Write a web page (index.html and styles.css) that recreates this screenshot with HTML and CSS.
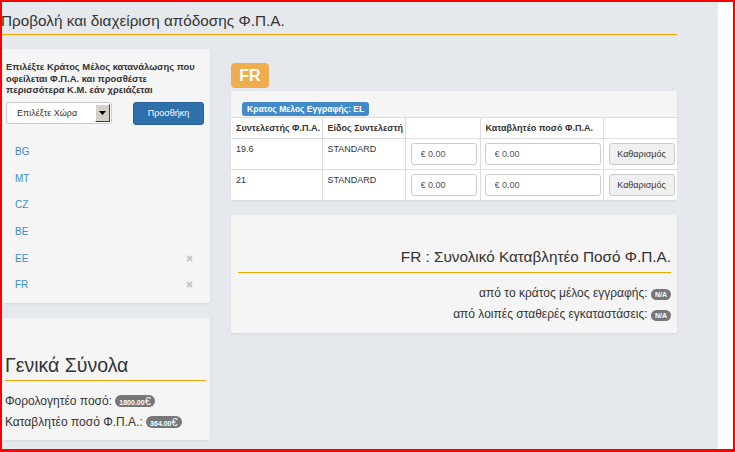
FILE: index.html
```html
<!DOCTYPE html>
<html lang="el">
<head>
<meta charset="utf-8">
<title>Φ.Π.Α.</title>
<link rel="stylesheet" href="styles.css">
</head>
<body>
<div class="frame">
  <div class="main">
    <div class="page-title">Προβολή και διαχείριση απόδοσης Φ.Π.Α.</div>
    <div class="cols">
      <div class="left-col">
        <div class="panel countries">
          <p class="intro">Επιλέξτε Κράτος Μέλος κατανάλωσης που οφείλεται Φ.Π.Α. και προσθέστε περισσότερα Κ.Μ. εάν χρειάζεται</p>
          <div class="add-row">
            <div class="select"><span class="select-text">Επιλέξτε Χώρα</span><span class="select-arrow"><svg width="7" height="4" viewBox="0 0 7 4"><path d="M0 0h7L3.5 4z" fill="#000"/></svg></span></div>
            <button class="btn-primary">Προσθήκη</button>
          </div>
          <ul class="country-list">
            <li><a>BG</a></li>
            <li><a>MT</a></li>
            <li><a>CZ</a></li>
            <li><a>BE</a></li>
            <li><a>EE</a><svg class="remove" width="7" height="7" viewBox="0 0 7 7"><path d="M1 1l5 5M6 1L1 6" stroke="#c4c4c4" stroke-width="1.8"/></svg></li>
            <li><a>FR</a><svg class="remove" width="7" height="7" viewBox="0 0 7 7"><path d="M1 1l5 5M6 1L1 6" stroke="#c4c4c4" stroke-width="1.8"/></svg></li>
          </ul>
        </div>
        <div class="panel totals">
          <h2 class="totals-title">Γενικά Σύνολα</h2>
          <div class="total-line">Φορολογητέο ποσό: <span class="badge">1800.00<span class="eur">€</span></span></div>
          <div class="total-line">Καταβλητέο ποσό Φ.Π.Α.: <span class="badge">364.00<span class="eur">€</span></span></div>
        </div>
      </div>
      <div class="right-col">
        <div class="country-tag">FR</div>
        <div class="panel rates">
          <div class="rates-top"><span class="label-blue">Κρατος Μελος Εγγραφής: EL</span></div>
          <table class="rates-table">
            <colgroup><col class="c1"><col class="c2"><col class="c3"><col class="c4"><col class="c5"></colgroup>
            <thead>
              <tr><th>Συντελεστής Φ.Π.Α.</th><th>Είδος Συντελεστή</th><th></th><th>Καταβλητέο ποσό Φ.Π.Α.</th><th></th></tr>
            </thead>
            <tbody>
              <tr><td>19.6</td><td>STANDARD</td><td><input class="inp inp-s" placeholder="€ 0.00"></td><td><input class="inp inp-l" placeholder="€ 0.00"></td><td><button class="btn-default">Καθαρισμός</button></td></tr>
              <tr><td>21</td><td>STANDARD</td><td><input class="inp inp-s" placeholder="€ 0.00"></td><td><input class="inp inp-l" placeholder="€ 0.00"></td><td><button class="btn-default">Καθαρισμός</button></td></tr>
            </tbody>
          </table>
        </div>
        <div class="panel summary">
          <h3 class="summary-title">FR : Συνολικό Καταβλητέο Ποσό Φ.Π.Α.</h3>
          <div class="summary-line">από το κράτος μέλος εγγραφής: <span class="badge badge-na">N/A</span></div>
          <div class="summary-line">από λοιπές σταθερές εγκαταστάσεις: <span class="badge badge-na">N/A</span></div>
        </div>
      </div>
    </div>
  </div>
  <div class="gutter"></div>
</div>
</body>
</html>
```
FILE: styles.css
```css
* { box-sizing: border-box; }
html, body { margin: 0; padding: 0; }
body {
  font-family: "Liberation Sans", Arial, sans-serif;
  color: #333;
  background: #fff;
}
.frame {
  width: 735px;
  height: 452px;
  border: 2px solid #ff0000;
  border-bottom-width: 3px;
  display: flex;
  overflow: hidden;
}
.main {
  width: 716px;
  background: #e5e9ee;
}
.gutter { flex: 1; background: #fff; }

.page-title {
  width: 676px;
  font-size: 15.3px;
  line-height: 20px;
  padding: 9px 0 3px 0;
  border-bottom: 1px solid #f0a500;
  color: #333;
  white-space: nowrap;
  margin-left: -1px;
}
.cols {
  display: flex;
  gap: 21px;
  margin-top: 14px;
}
.left-col { width: 208px; display: flex; flex-direction: column; gap: 15px; }
.right-col { width: 446px; display: flex; flex-direction: column; }

.panel {
  background: #f5f5f5;
  box-shadow: 0 1px 2px rgba(0,0,0,0.08);
  border-radius: 2px;
}

/* countries panel */
.countries { height: 254px; padding: 12px 4px 0 4px; }
.intro {
  margin: 0;
  font-size: 9.4px;
  line-height: 11.5px;
  font-weight: bold;
  color: #333;
  max-width: 196px;
}
.add-row { display: flex; margin-top: 6px; }
.select {
  width: 106px;
  height: 22px;
  background: #fff;
  border: 1px solid #ccc;
  border-radius: 3px;
  display: flex;
  align-items: center;
  justify-content: space-between;
  padding: 1px 1px 1px 10px;
}
.select-text { font-size: 9px; color: #333; }
.select-arrow {
  width: 15px;
  height: 18px;
  background: #d4d0c8;
  border: 1px solid;
  border-color: #fff #404040 #404040 #fff;
  display: flex;
  align-items: center;
  justify-content: center;
}
.btn-primary {
  margin-left: 21px;
  width: 71px;
  height: 23px;
  background: #2f6fab;
  border: 1px solid #285f94;
  border-radius: 3px;
  color: #fff;
  font-family: inherit;
  font-size: 9px;
  padding: 0;
}
.country-list {
  list-style: none;
  margin: 13.6px 0 0 0;
  padding: 0;
}
.country-list li {
  height: 26.67px;
  display: flex;
  align-items: center;
  justify-content: space-between;
  padding: 0 13px 0 9px;
}
.country-list a {
  font-size: 10px;
  color: #428bca;
}

/* totals panel */
.totals { height: 122px; padding: 35px 4px 0 3px; }
.totals-title {
  margin: 0;
  font-size: 19.5px;
  font-weight: normal;
  line-height: 24px;
  padding-bottom: 3px;
  color: #333;
}
.totals-title, .summary-title { border-bottom: 1px solid #f0a500; }
.total-line {
  font-size: 12px;
  line-height: 21px;
  color: #333;
}
.total-line:first-of-type { margin-top: 10px; }
.badge {
  display: inline-block;
  background: #777;
  color: #fff;
  font-size: 7px;
  font-weight: bold;
  line-height: 12px;
  height: 12px;
  padding: 0 4px;
  border-radius: 6px;
  vertical-align: 0;
}
.badge .eur { font-size: 11px; font-weight: normal; line-height: 12px; }

/* FR tag */
.country-tag {
  margin-top: 14px;
  width: 38px;
  height: 25px;
  background: #f0ad4e;
  color: #fff;
  font-weight: bold;
  font-size: 16px;
  line-height: 25px;
  text-align: center;
  border-radius: 4px;
}

/* rates panel */
.rates { margin-top: 3px; height: 109px; overflow: hidden; }
.rates-top { height: 26px; padding: 7px 0 0 11px; }
.label-blue {
  display: inline-block;
  height: 14px;
  line-height: 14px;
  padding: 0 5px;
  background: #428bca;
  color: #fff;
  font-size: 8.5px;
  font-weight: bold;
  border-radius: 3px;
}
.rates-table {
  width: 446px;
  border-collapse: collapse;
  table-layout: fixed;
  background: #fff;
}
.c1 { width: 91px; } .c2 { width: 83px; } .c3 { width: 75px; } .c4 { width: 123px; } .c5 { width: 74px; }
.rates-table th, .rates-table td {
  border: 1px solid #ddd;
  font-size: 9px;
  color: #333;
  text-align: left;
}
.rates-table tr > :first-child { border-left: none; }
.rates-table tr > :last-child { border-right: none; }
.rates-table th {
  height: 21px;
  padding: 0 5px;
  font-weight: bold;
  vertical-align: middle;
  white-space: nowrap;
}
.rates-table td {
  height: 31px;
  padding: 4px 4px 0 5px;
  vertical-align: top;
  line-height: 11px;
}
.rates-table td:nth-child(1), .rates-table td:nth-child(2) { padding-top: 5px; }
.inp {
  display: block;
  height: 22px;
  border: 1px solid #ccc;
  border-radius: 3px;
  font-family: inherit;
  font-size: 9px;
  padding: 0 9px;
  background: #fff;
}
.inp::placeholder { color: #555; }
.inp-s { width: 66px; }
.inp-l { width: 116px; margin-left: -1px; }
.btn-default {
  display: block;
  width: 66px;
  height: 22px;
  background: #f0f0f0;
  border: 1px solid #ccc;
  border-radius: 3px;
  font-family: inherit;
  font-size: 9px;
  color: #333;
  padding: 0;
}

/* summary panel */
.summary { margin-top: 15px; height: 118px; padding: 32px 6px 0 7px; text-align: right; }
.summary-title {
  margin: 0;
  font-size: 15.3px;
  font-weight: normal;
  line-height: 20px;
  padding-bottom: 5px;
  color: #333;
}
.summary-line { font-size: 12px; line-height: 21px; color: #333; }
.summary-line:first-of-type { margin-top: 10px; }
.badge-na { padding: 0 4px; height: 11px; line-height: 11px; }
```
